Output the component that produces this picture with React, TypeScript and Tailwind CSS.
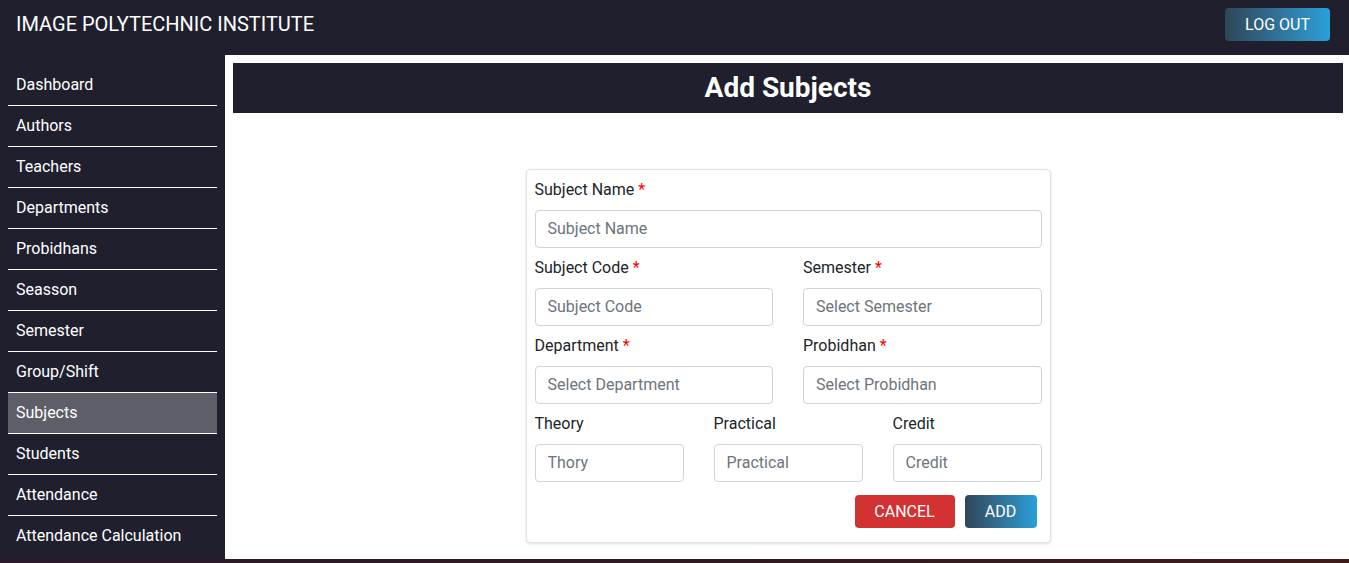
import React from 'react';

const navItems = [
  'Dashboard',
  'Authors',
  'Teachers',
  'Departments',
  'Probidhans',
  'Seasson',
  'Semester',
  'Group/Shift',
  'Subjects',
  'Students',
  'Attendance',
  'Attendance Calculation',
];

const Field = ({
  label,
  placeholder,
  required,
}: {
  label: string;
  placeholder: string;
  required?: boolean;
}) => (
  <div className="flex flex-col">
    <label className="h-6 text-[16px] leading-6 text-[#212529]">
      {label}
      {required && <span className="text-[#ff0000]"> *</span>}
    </label>
    <input
      placeholder={placeholder}
      className="mt-[8px] h-[38px] w-full rounded-[4px] border border-[#ced4da] bg-white px-3 pb-[1px] text-[16px] text-[#212529] placeholder:text-[#6c757d] outline-none"
    />
  </div>
);

const App = () => {
  return (
    <div
      className="w-full bg-white"
      style={{ fontFamily: 'Roboto, "Liberation Sans", sans-serif' }}
    >
      <header className="flex h-[55px] items-start justify-between bg-[#1f1f2e] pl-4 pr-[19px]">
        <h1 className="pt-[10px] text-[20px] leading-[28px] text-white">IMAGE POLYTECHNIC INSTITUTE</h1>
        <button className="mt-2 h-[33px] rounded-[4px] bg-gradient-to-r from-[#2d4659] to-[#27a0da] px-[20px] text-[16px] text-white">
          LOG OUT
        </button>
      </header>

      <div className="flex h-[504px]">
        <aside className="w-[225px] shrink-0 bg-[#1f1f2e] pl-2 pr-2 pt-[10px]">
          <ul>
            {navItems.map((item, i) => (
              <li
                key={item}
                className={`flex h-[41px] items-center border-b px-2 text-[16px] text-white ${
                  i === navItems.length - 1 ? 'border-transparent' : 'border-white'
                } ${item === 'Subjects' ? 'bg-[#5e5e68]' : ''}`}
              >
                {item}
              </li>
            ))}
          </ul>
        </aside>

        <main className="flex-1 pl-2 pr-[6px] pt-2">
          <div className="flex h-[50px] items-center justify-center bg-[#1f1f2e]">
            <h2 className="text-[28px] font-bold text-white">Add Subjects</h2>
          </div>

          <div className="mt-[56px] flex justify-center">
            <form className="w-[525px] rounded-[4px] border border-[#dee2e6] bg-white px-2 pb-[14px] pt-2 shadow-[0_1px_3px_rgba(0,0,0,0.12)]">
              <div className="flex flex-col gap-[8px]">
                <Field label="Subject Name" placeholder="Subject Name" required />
                <div className="grid grid-cols-2 gap-x-[30px]">
                  <Field label="Subject Code" placeholder="Subject Code" required />
                  <Field label="Semester" placeholder="Select Semester" required />
                </div>
                <div className="grid grid-cols-2 gap-x-[30px]">
                  <Field label="Department" placeholder="Select Department" required />
                  <Field label="Probidhan" placeholder="Select Probidhan" required />
                </div>
                <div className="grid grid-cols-3 gap-x-[30px]">
                  <Field label="Theory" placeholder="Thory" />
                  <Field label="Practical" placeholder="Practical" />
                  <Field label="Credit" placeholder="Credit" />
                </div>
              </div>
              <div className="mt-[13px] flex justify-end gap-[10px] pr-[5px]">
                <button
                  type="button"
                  className="h-[33px] w-[100px] rounded-[4px] bg-[#d23232] text-[16px] text-white"
                >
                  CANCEL
                </button>
                <button
                  type="button"
                  className="h-[33px] w-[72px] rounded-[4px] bg-gradient-to-r from-[#2d4659] to-[#27a0da] text-[16px] text-white"
                >
                  ADD
                </button>
              </div>
            </form>
          </div>
        </main>
      </div>

      <div className="h-[4px] bg-gradient-to-r from-[#2a1a2a] via-[#2f1a22] to-[#3d1c18]" />
    </div>
  );
};

export default App;
